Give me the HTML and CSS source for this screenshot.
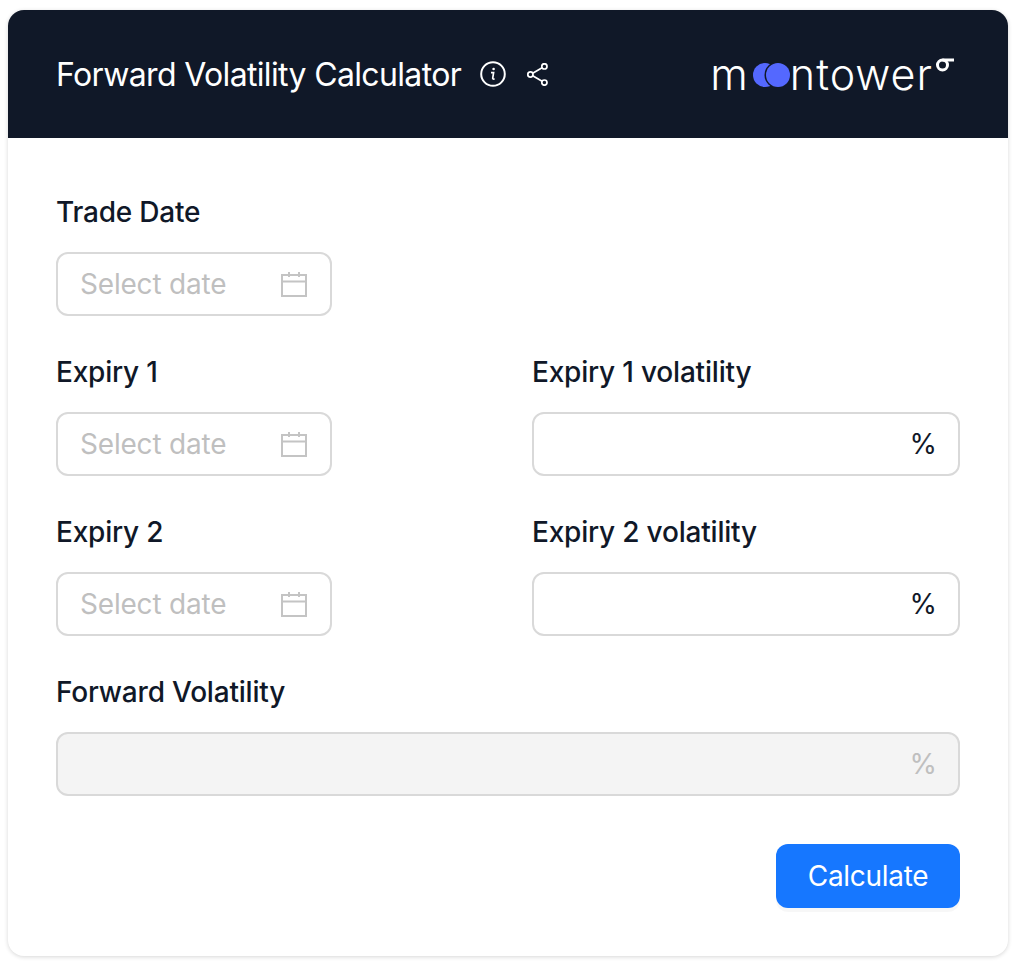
FILE: index.html
```html
<!DOCTYPE html>
<html lang="en">
<head>
    <meta charset="UTF-8">
    <title>Forward Volatility Calculator</title>
    <link rel="stylesheet" href="styles.css">
</head>
<body>
    <div class="card">
        <div class="card-header">
            <div class="title-group">
                <h1 class="title">Forward Volatility Calculator</h1>
                <svg class="icon-info" viewBox="0 0 26 26" fill="none" stroke="#fff">
                    <circle cx="13" cy="13" r="11.8" stroke-width="2"/>
                    <path d="M11 11.6h2.6l-.9 5.6c-.1.9.6 1.2 1.9.6" stroke-width="1.7"/>
                    <circle cx="13.6" cy="8" r="1.3" fill="#fff" stroke="none"/>
                </svg>
                <svg class="icon-share" viewBox="0 0 21 23" fill="none" stroke="#fff" stroke-width="1.7">
                    <circle cx="17.4" cy="3.4" r="2.6"/>
                    <circle cx="3.4" cy="11.5" r="2.6"/>
                    <circle cx="17.4" cy="19.6" r="2.6"/>
                    <path d="M5.7 10.2l9.4-5.5M5.7 12.8l9.4 5.5"/>
                </svg>
            </div>
            <div class="logo">
                <span>m</span>
                <svg class="logo-moons" viewBox="0 0 38 24">
                    <circle cx="13" cy="12" r="12" fill="#5468ff"/>
                    <circle cx="26" cy="12" r="13.5" fill="#101828"/>
                    <circle cx="26" cy="12" r="12" fill="#5468ff"/>
                </svg>
                <span>ntower</span>
                <svg class="logo-sigma" viewBox="0 0 19 15" fill="none" stroke="#fff" stroke-width="3">
                    <circle cx="7.5" cy="8" r="5"/>
                    <path d="M7.5 3h11.5"/>
                </svg>
            </div>
        </div>

        <div class="card-body">
            <div class="form-grid">
                <div class="field full">
                    <label>Trade Date</label>
                    <div class="input date-input">
                        <span class="placeholder">Select date</span>
                        <svg class="icon-cal" viewBox="0 0 26 26" fill="none" stroke="#c4c4c4" stroke-width="2">
                            <rect x="1" y="4" width="24" height="21"/>
                            <path d="M1 10.5h24M8 1v5M18 1v5"/>
                        </svg>
                    </div>
                </div>

                <div class="field">
                    <label>Expiry 1</label>
                    <div class="input date-input">
                        <span class="placeholder">Select date</span>
                        <svg class="icon-cal" viewBox="0 0 26 26" fill="none" stroke="#c4c4c4" stroke-width="2">
                            <rect x="1" y="4" width="24" height="21"/>
                            <path d="M1 10.5h24M8 1v5M18 1v5"/>
                        </svg>
                    </div>
                </div>
                <div class="field">
                    <label>Expiry 1 volatility</label>
                    <div class="input"><span class="suffix">%</span></div>
                </div>

                <div class="field">
                    <label>Expiry 2</label>
                    <div class="input date-input">
                        <span class="placeholder">Select date</span>
                        <svg class="icon-cal" viewBox="0 0 26 26" fill="none" stroke="#c4c4c4" stroke-width="2">
                            <rect x="1" y="4" width="24" height="21"/>
                            <path d="M1 10.5h24M8 1v5M18 1v5"/>
                        </svg>
                    </div>
                </div>
                <div class="field">
                    <label>Expiry 2 volatility</label>
                    <div class="input"><span class="suffix">%</span></div>
                </div>

                <div class="field full">
                    <label>Forward Volatility</label>
                    <div class="input disabled"><span class="suffix">%</span></div>
                </div>
            </div>

            <div class="actions">
                <button class="btn-primary">Calculate</button>
            </div>
        </div>
    </div>
</body>
</html>
```

FILE: styles.css
```css
* {
    box-sizing: border-box;
}
body {
    margin: 0;
    padding: 10px 12px 12px 8px;
    background-color: #fff;
    font-family: Inter, "Liberation Sans", sans-serif;
    color: #101828;
}
.card {
    width: 1000px;
    height: 946px;
    border-radius: 16px;
    background-color: #fff;
    box-shadow: 0 1px 4px rgba(0, 0, 0, 0.16);
    overflow: hidden;
}
.card-header {
    height: 128px;
    padding: 0 54px 0 48px;
    background-color: #101828;
    display: flex;
    align-items: center;
    justify-content: space-between;
    color: #fff;
}
.title-group {
    display: flex;
    align-items: center;
}
.title {
    margin: 2px 0 0;
    font-size: 32px;
    font-weight: 400;
    line-height: 40px;
    letter-spacing: -0.65px;
}
.icon-info {
    width: 26px;
    height: 26px;
    margin-left: 19px;
}
.icon-share {
    width: 21px;
    height: 23px;
    margin-left: 21px;
}
.logo {
    display: flex;
    align-items: center;
    font-size: 43px;
    font-weight: 350;
    line-height: 40px;
    letter-spacing: 1px;
    margin-top: -1px;
}
.logo-moons {
    width: 38px;
    height: 24px;
    margin: 2px 0 0 3px;
}
.logo-sigma {
    width: 19px;
    height: 15px;
    margin: -18px 0 0 2px;
}
.card-body {
    padding: 58px 48px 0;
}
.form-grid {
    display: grid;
    grid-template-columns: 428px 428px;
    column-gap: 48px;
    row-gap: 40px;
}
.field.full {
    grid-column: 1 / 3;
}
label {
    display: block;
    height: 32px;
    margin-bottom: 24px;
    font-size: 28px;
    font-weight: 500;
    line-height: 32px;
    letter-spacing: -0.2px;
}
.input {
    height: 64px;
    padding: 0 24px 0 22px;
    border: 2px solid #d9d9d9;
    border-radius: 12px;
    display: flex;
    align-items: center;
    justify-content: flex-end;
    font-size: 28px;
}
.date-input {
    width: 276px;
    justify-content: space-between;
}
.placeholder {
    color: #bfbfbf;
    letter-spacing: -0.2px;
}
.suffix {
    margin-right: -3px;
}
.icon-cal {
    width: 26px;
    height: 26px;
    margin-right: -1px;
}
.disabled {
    background-color: #f4f4f4;
}
.disabled .suffix {
    color: #bfbfbf;
}
.actions {
    margin-top: 48px;
    display: flex;
    justify-content: flex-end;
}
.btn-primary {
    width: 184px;
    height: 64px;
    border: none;
    border-radius: 12px;
    background-color: #1677ff;
    box-shadow: 0 4px 0 rgba(0, 0, 0, 0.03);
    color: #fff;
    font-family: inherit;
    font-size: 28px;
    letter-spacing: -0.3px;
}
```
